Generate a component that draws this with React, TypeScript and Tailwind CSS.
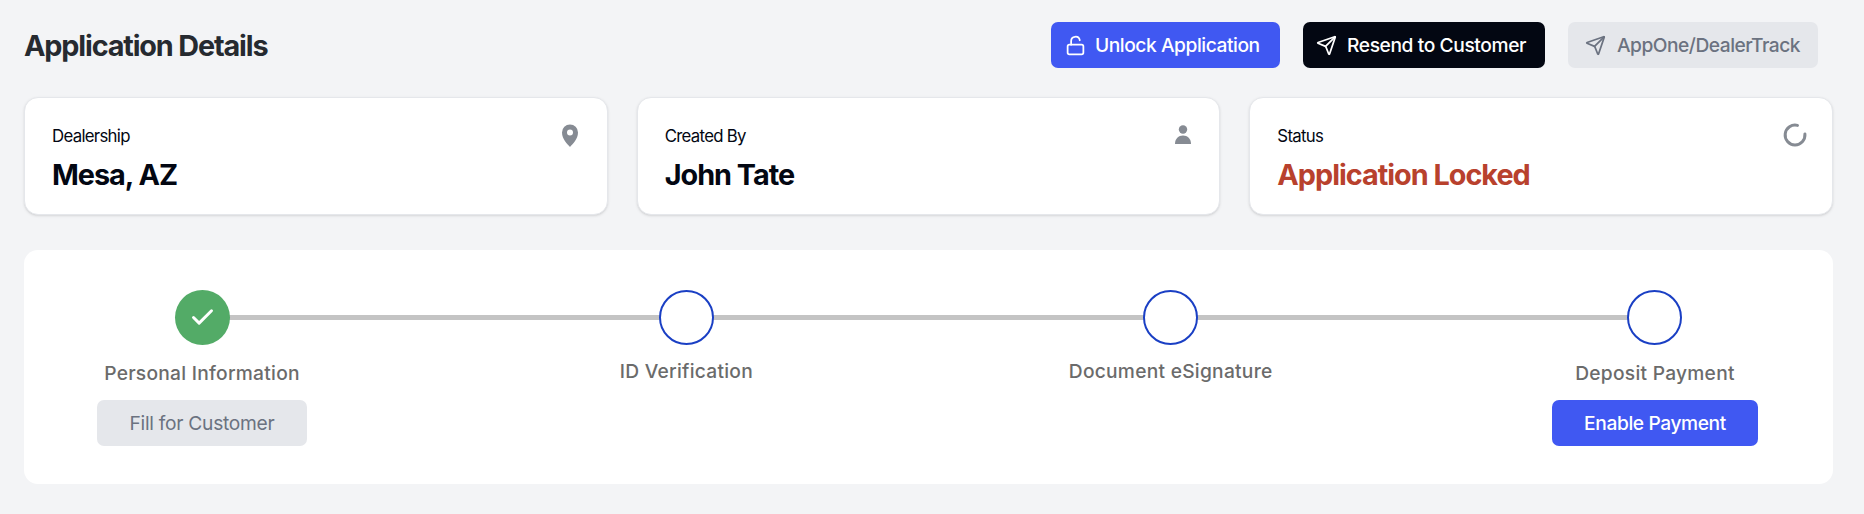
import { Check, LockOpen, Send } from "lucide-react";

const steps = [
  { label: "Personal Information", done: true, action: "Fill for Customer", muted: true },
  { label: "ID Verification" },
  { label: "Document eSignature" },
  { label: "Deposit Payment", action: "Enable Payment" },
];

const PinIcon = () => (
  <svg width="22" height="26" viewBox="0 0 22 26" className="text-[#868b93]">
    <path
      fill="currentColor"
      fillRule="evenodd"
      d="M10 25 C7.5 22 2 17.5 2 10.5 A8 8 0 0 1 18 10.5 C18 17.5 12.5 22 10 25 Z M10 7.5 A3 3 0 1 0 10 13.5 A3 3 0 1 0 10 7.5 Z"
    />
  </svg>
);

const PersonIcon = () => (
  <svg width="22" height="26" viewBox="0 0 22 26" className="text-[#868b93]">
    <circle cx="11" cy="7.5" r="4.2" fill="currentColor" />
    <path fill="currentColor" d="M3 22 C3 16.5 6.5 13.5 11 13.5 C15.5 13.5 19 16.5 19 22 Z" />
  </svg>
);

const SpinnerIcon = () => (
  <svg width="26" height="26" viewBox="0 0 26 26" fill="none" className="text-[#868b93]">
    <path
      stroke="currentColor"
      strokeWidth="3"
      strokeLinecap="round"
      d="M16.5 3.4 A9.9 9.9 0 1 0 23.9 12"
    />
  </svg>
);

const InfoCard = ({ label, value, icon, red }: { label: string; value: string; icon: React.ReactNode; red?: boolean }) => (
  <div className="flex-1 h-[118px] rounded-[14px] bg-white border border-[#e5e7eb] shadow-sm pl-[27px] pr-[25px] pt-[26px]">
    <div className="flex justify-between items-start">
      <div>
        <p className="text-[16.8px] leading-[24px] tracking-[-0.7px] text-[#030712]">{label}</p>
        <p className={`mt-[8px] text-[28.8px] leading-[38px] font-bold tracking-[-1px] ${red ? "text-[#b8412d]" : "text-[#030712]"}`}>{value}</p>
      </div>
      <div className="-mt-[2px]">{icon}</div>
    </div>
  </div>
);

const App = () => {
  return (
    <div className="w-[1864px] h-[514px] bg-[#f3f4f6] pl-[24px] pr-[31px] font-['Inter',sans-serif] overflow-hidden">
      <div className="flex items-center justify-between h-[97px] pr-[15px] pb-[7px]">
        <h1 className="mt-[2px] text-[28.8px] font-bold tracking-[-1.15px] text-[#262a30]">Application Details</h1>
        <div className="flex gap-[23px]">
          <button className="flex items-center gap-[9px] h-[46px] w-[229px] pl-[14px] rounded-[7px] bg-[#4058f2] text-white text-[19.2px] font-medium tracking-[-0.45px]">
            <LockOpen className="w-[21px] h-[21px]" strokeWidth={2} />
            Unlock Application
          </button>
          <button className="flex items-center gap-[10px] h-[46px] w-[242px] pl-[13px] rounded-[7px] bg-[#030712] text-white text-[19.2px] font-medium tracking-[-0.4px]">
            <Send className="w-[21px] h-[21px]" strokeWidth={2} />
            Resend to Customer
          </button>
          <button className="flex items-center gap-[11px] h-[46px] w-[250px] pl-[17px] rounded-[7px] bg-[#e5e7eb] text-[#6b7280] text-[19.2px] font-medium tracking-[-0.5px]">
            <Send className="w-[21px] h-[21px]" strokeWidth={2} />
            AppOne/DealerTrack
          </button>
        </div>
      </div>

      <div className="flex gap-[29px]">
        <InfoCard label="Dealership" value="Mesa, AZ" icon={<PinIcon />} />
        <InfoCard label="Created By" value="John Tate" icon={<PersonIcon />} />
        <InfoCard label="Status" value="Application Locked" icon={<SpinnerIcon />} red />
      </div>

      <div className="relative mt-[35px] h-[234px] rounded-[14px] bg-white px-[73px] pt-[40px] flex justify-between">
        <div className="absolute left-[178px] right-[178px] top-[65px] h-[5px] bg-[#c4c4c4]" />
        {steps.map((step) => (
          <div key={step.label} className="relative w-[210px] flex flex-col items-center">
            {step.done ? (
              <div className="w-[55px] h-[55px] rounded-full bg-[#53ab67] flex items-center justify-center text-white">
                <Check className="w-[27px] h-[27px]" strokeWidth={2.6} />
              </div>
            ) : (
              <div className="w-[55px] h-[55px] rounded-full bg-white border-[2.5px] border-[#1a3fc4]" />
            )}
            <p className={`text-[19.2px] leading-[28px] font-medium tracking-[0.26px] text-[#6b6b6b] whitespace-nowrap ${step.action ? "mt-[14px]" : "mt-[12px]"}`}>
              {step.label}
            </p>
            {step.action && (
              <button
                className={`mt-[13px] h-[46px] rounded-[7px] text-[19.2px] ${step.muted ? "w-[210px] bg-[#e5e7eb] text-[#6b7280] tracking-[-0.28px]" : "w-[206px] bg-[#4058f2] text-white font-medium tracking-[-0.4px]"}`}
              >
                {step.action}
              </button>
            )}
          </div>
        ))}
      </div>
    </div>
  );
};

export default App;
